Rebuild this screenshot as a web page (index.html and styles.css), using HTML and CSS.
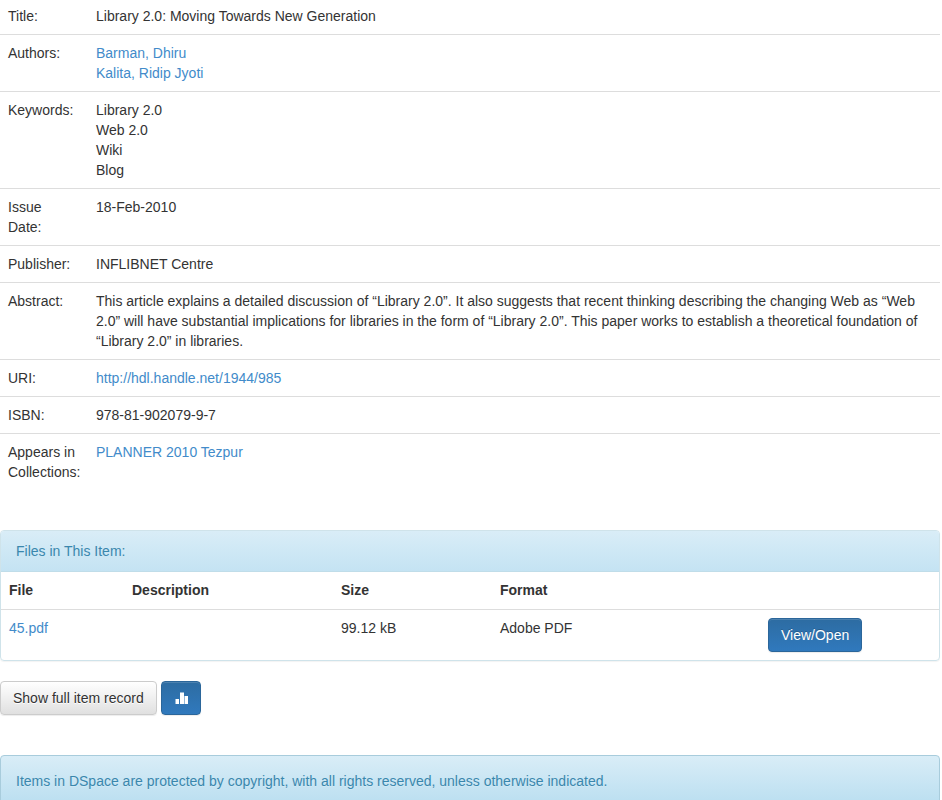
FILE: index.html
```html
<!DOCTYPE html>
<html lang="en">
<head>
<meta charset="utf-8">
<title>Library 2.0: Moving Towards New Generation</title>
<link rel="stylesheet" href="styles.css">
</head>
<body>
<main class="page">
<table class="item-table">
<tbody>
<tr><td class="label">Title:</td><td class="value">Library 2.0: Moving Towards New Generation</td></tr>
<tr><td class="label">Authors:</td><td class="value"><a href="#">Barman, Dhiru</a><br><a href="#">Kalita, Ridip Jyoti</a></td></tr>
<tr><td class="label">Keywords:</td><td class="value">Library 2.0<br>Web 2.0<br>Wiki<br>Blog</td></tr>
<tr><td class="label">Issue<br>Date:</td><td class="value">18-Feb-2010</td></tr>
<tr><td class="label">Publisher:</td><td class="value">INFLIBNET Centre</td></tr>
<tr><td class="label">Abstract:</td><td class="value">This article explains a detailed discussion of “Library 2.0”. It also suggests that recent thinking describing the changing Web as “Web 2.0” will have substantial implications for libraries in the form of “Library 2.0”. This paper works to establish a theoretical foundation of “Library 2.0” in libraries.</td></tr>
<tr><td class="label">URI:</td><td class="value"><a href="#">http://hdl.handle.net/1944/985</a></td></tr>
<tr><td class="label">ISBN:</td><td class="value">978-81-902079-9-7</td></tr>
<tr><td class="label">Appears in<br>Collections:</td><td class="value"><a href="#">PLANNER 2010 Tezpur</a></td></tr>
</tbody>
</table>

<section class="panel">
<div class="panel-heading">Files in This Item:</div>
<table class="files-table">
<thead>
<tr><th class="col-file">File</th><th class="col-desc">Description</th><th class="col-size">Size</th><th class="col-format">Format</th><th></th></tr>
</thead>
<tbody>
<tr><td><a href="#">45.pdf</a></td><td></td><td>99.12 kB</td><td>Adobe PDF</td><td><a class="btn btn-primary" href="#">View/Open</a></td></tr>
</tbody>
</table>
</section>

<div class="actions">
<a class="btn btn-default" href="#">Show full item record</a>
<a class="btn btn-primary btn-icon" href="#" aria-label="Statistics">
<svg class="stats-icon" width="14" height="14" viewBox="0 0 14 14" aria-hidden="true"><path fill="currentColor" d="M1.500 8h3.500v5H1.500zM6 1.500h4V13H6zM10.500 5h3.500v8h-3.500z"/></svg>
</a>
</div>

<div class="alert">Items in DSpace are protected by copyright, with all rights reserved, unless otherwise indicated.</div>
</main>
</body>
</html>
```
FILE: styles.css
```css
* { box-sizing: border-box; }
html, body { margin: 0; height: 800px; overflow: hidden; background: #fff; }
body { font-family: "Liberation Sans", Arial, sans-serif; font-size: 14px; line-height: 20px; color: #333; }
a { color: #428bca; text-decoration: none; }
.page { width: 940px; margin-top: -2px; }
table { border-collapse: collapse; border-spacing: 0; width: 100%; }

.item-table { table-layout: fixed; margin-bottom: 40px; }
.item-table td { padding: 8px; vertical-align: top; }
.item-table tr + tr td { border-top: 1px solid #ddd; }
.label { width: 88px; }

.panel { border: 1px solid #cfe3ea; border-radius: 4px; box-shadow: 0 1px 1px rgba(0,0,0,.05); margin-bottom: 20px; overflow: hidden; }
.panel-heading { padding: 10px 15px; color: #3a87ad; background: linear-gradient(#d9edf7, #c4e3f3); border-bottom: 1px solid #c0dde9; }
.files-table { table-layout: fixed; }
.files-table th, .files-table td { padding: 8px; vertical-align: top; text-align: left; }
.files-table th { padding-bottom: 9px; border-bottom: 1px solid #ddd; font-weight: bold; }
.col-file { width: 123px; }
.col-desc { width: 209px; }
.col-size { width: 159px; }
.col-format { width: 268px; }

.btn { display: inline-block; padding: 6px 12px; border: 1px solid transparent; border-radius: 4px; font-size: 14px; line-height: 20px; text-align: center; vertical-align: middle; white-space: nowrap; box-shadow: inset 0 1px 0 rgba(255,255,255,.15), 0 1px 1px rgba(0,0,0,.075); }
.btn-primary { color: #fff; background: linear-gradient(#2d6ca2, #3079bd); border-color: #2b669a; text-shadow: 0 -1px 0 rgba(0,0,0,.2); }
.btn-default { color: #333; background: linear-gradient(#fff, #e0e0e0); border-color: #ccc; text-shadow: 0 1px 0 #fff; }
.btn-icon { width: 40px; height: 34px; padding: 0; display: inline-flex; align-items: center; justify-content: center; }

.actions { display: flex; gap: 4px; margin-bottom: 40px; }
.alert { padding: 15px; border: 1px solid #a8ccdc; border-radius: 4px; color: #3a87ad; background: linear-gradient(#d9edf7, #b9def0); text-shadow: 0 1px 0 rgba(255,255,255,.2); }
```
